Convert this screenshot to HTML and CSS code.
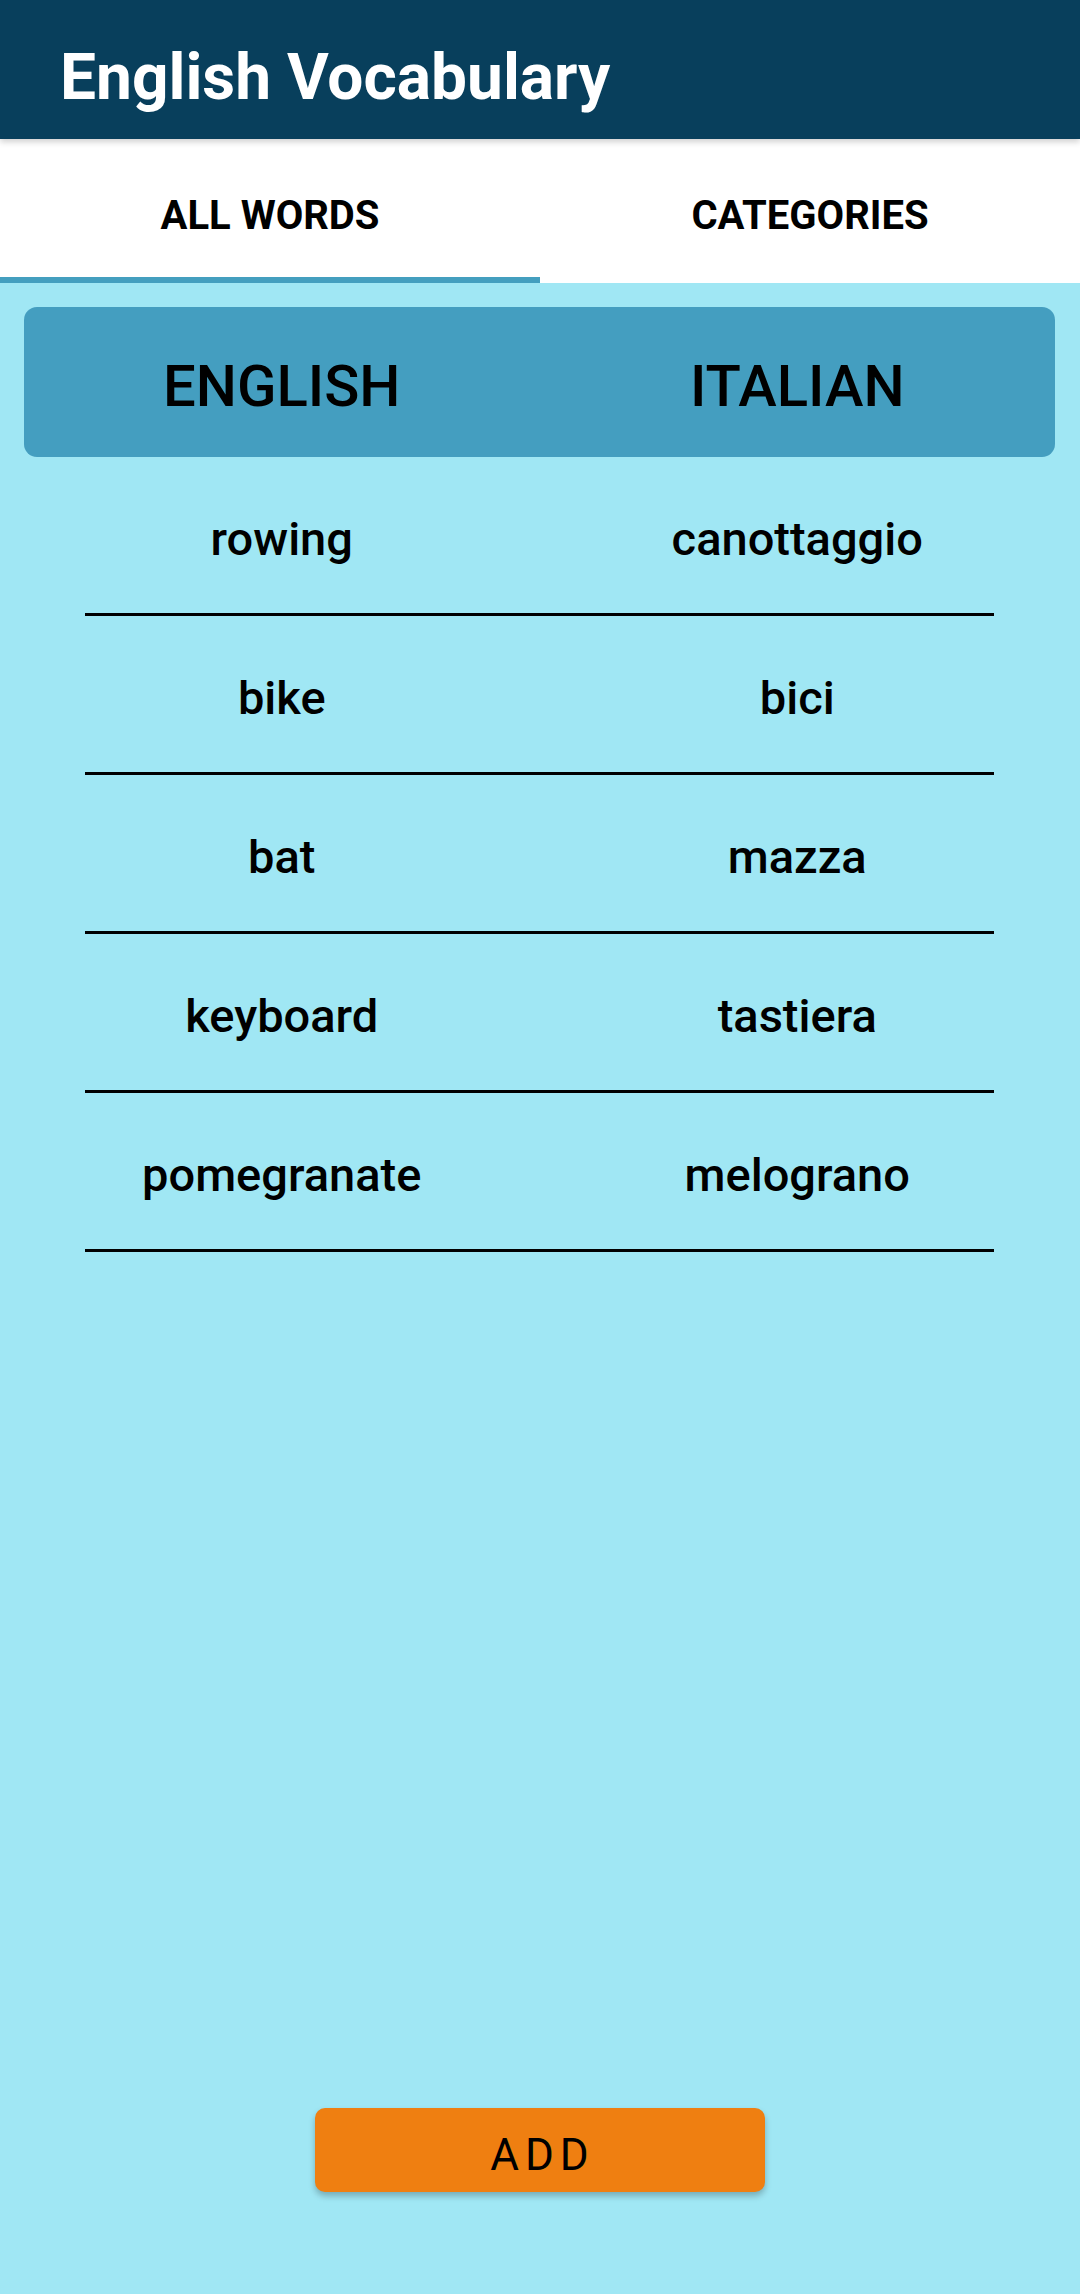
FILE: index.html
```html
<!DOCTYPE html>
<html lang="en">
<head>
<meta charset="utf-8">
<title>English Vocabulary</title>
<link rel="stylesheet" href="styles.css">
</head>
<body>
<div class="app">
  <header class="appbar">
    <h1 class="title">English Vocabulary</h1>
  </header>
  <nav class="tabs">
    <div class="tab active"><span>ALL WORDS</span></div>
    <div class="tab"><span>CATEGORIES</span></div>
  </nav>
  <main class="content">
    <div class="table-head">
      <div class="head-cell">ENGLISH</div>
      <div class="head-cell">ITALIAN</div>
    </div>
    <div class="rows">
      <div class="row">
        <div class="cells"><div class="cell">rowing</div><div class="cell">canottaggio</div></div>
        <div class="line"></div>
      </div>
      <div class="row">
        <div class="cells"><div class="cell">bike</div><div class="cell">bici</div></div>
        <div class="line"></div>
      </div>
      <div class="row">
        <div class="cells"><div class="cell">bat</div><div class="cell">mazza</div></div>
        <div class="line"></div>
      </div>
      <div class="row">
        <div class="cells"><div class="cell">keyboard</div><div class="cell">tastiera</div></div>
        <div class="line"></div>
      </div>
      <div class="row">
        <div class="cells"><div class="cell">pomegranate</div><div class="cell">melograno</div></div>
        <div class="line"></div>
      </div>
    </div>
    <button class="add-btn">ADD</button>
  </main>
</div>
</body>
</html>
```

FILE: styles.css
```css
* { box-sizing: border-box; }
html, body { margin: 0; padding: 0; }
body {
  width: 1080px;
  height: 2294px;
  font-family: Roboto, "Noto Sans", "Liberation Sans", sans-serif;
  color: #000;
  background: #a0e7f4;
}
.app {
  display: flex;
  flex-direction: column;
  height: 2294px;
}
.appbar {
  height: 139px;
  background: #083f5c;
  padding: 40px 0 0 60px;
  position: relative;
  z-index: 2;
  box-shadow: 0 3px 6px rgba(0,0,0,0.18);
}
.title {
  margin: 0;
  color: #fff;
  font-size: 64px;
  font-weight: 700;
  line-height: normal;
  letter-spacing: 0;
}
.tabs {
  display: flex;
  height: 144px;
  background: #fff;
}
.tab {
  flex: 1;
  display: flex;
  align-items: center;
  justify-content: center;
  padding-top: 14px;
  font-size: 40px;
  font-weight: 700;
  border-bottom: 6px solid transparent;
}
.tab.active { border-bottom-color: #449fbf; }
.content {
  flex: 1;
  display: flex;
  flex-direction: column;
  padding: 24px 25px 0 24px;
}
.table-head {
  display: grid;
  grid-template-columns: 1fr 1fr;
  height: 150px;
  background: #449ec0;
  border-radius: 13px;
}
.head-cell {
  display: flex;
  align-items: center;
  justify-content: center;
  padding-top: 8px;
  font-size: 58px;
  font-weight: 500;
}
.row {
  display: flex;
  flex-direction: column;
}
.cells {
  display: grid;
  grid-template-columns: 1fr 1fr;
  height: 156px;
}
.cell {
  display: flex;
  align-items: center;
  justify-content: center;
  padding-top: 7px;
  font-size: 47px;
  font-weight: 500;
}
.line {
  height: 3px;
  background: #000;
  margin: 0 61px 0 61px;
}
.add-btn {
  margin: auto auto 102px auto;
  width: 450px;
  height: 84px;
  border: none;
  border-radius: 10px;
  background: #ef7f11;
  color: #000;
  font-family: Roboto, "Noto Sans", "Liberation Sans", sans-serif;
  font-size: 44px;
  font-weight: 400;
  letter-spacing: 6px;
  padding: 10px 0 0 6px;
  box-shadow: 0 4px 6px rgba(0,0,0,0.25);
}
```
